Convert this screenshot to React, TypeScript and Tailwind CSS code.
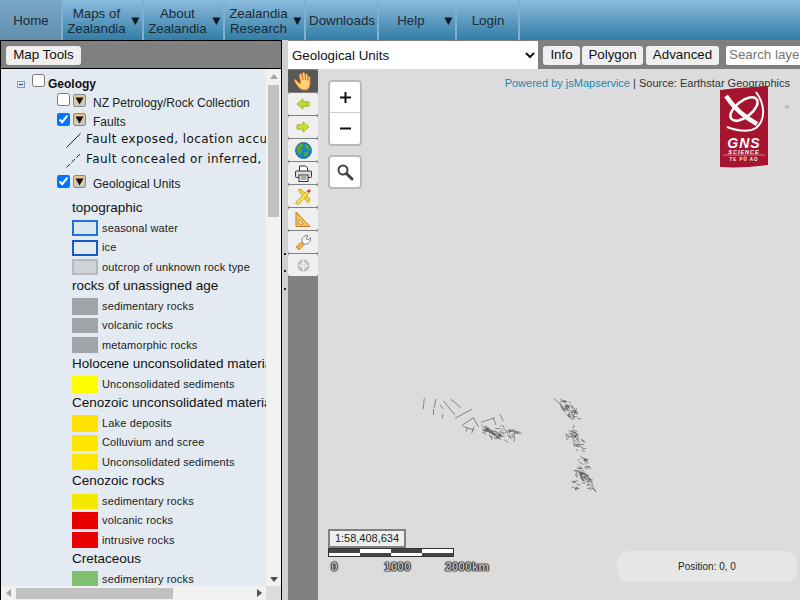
import React from "react";

const sans = "font-['Liberation_Sans',Arial,sans-serif]";

const nav = [
  { w: "w-[63px]", lines: ["Home"], active: true },
  { w: "w-[81px]", lines: ["Maps of", "Zealandia"], arrow: true },
  { w: "w-[81px]", lines: ["About", "Zealandia"], arrow: true },
  { w: "w-[81px]", lines: ["Zealandia", "Research"], arrow: true },
  { w: "w-[73px]", lines: ["Downloads"] },
  { w: "w-[78px]", lines: ["Help"], arrow: true, help: true },
  { w: "w-[63px]", lines: ["Login"] },
];

function Nav() {
  return (
    <div className="flex h-[40px] shrink-0 bg-gradient-to-b from-[#8bbcdd] to-[#2f7da6] text-[13.33px] leading-[15px] text-[#1c2a33]">
      {nav.map((n, i) => (
        <div
          key={i}
          className={
            n.w +
            " flex items-center border-r-2 border-[#7fb0cf] pl-[1px] " +
            (n.active ? "bg-gradient-to-b from-[#7aa6c4] to-[#5f8fae]" : "")
          }
        >
          {n.arrow ? (
            <>
              <div className={(n.help ? "w-[62px]" : "w-[66px]") + " pt-[1px] text-center"}>
                {n.lines.map((l) => (
                  <div key={l}>{l}</div>
                ))}
              </div>
              <span className="text-[13.33px] text-[#10181d]">▼</span>
            </>
          ) : (
            <div className="flex-1 text-center">{n.lines[0]}</div>
          )}
        </div>
      ))}
      <div className="flex-1" />
    </div>
  );
}

function Btn({ children, w }: { children: React.ReactNode; w: string }) {
  return (
    <div className={w + " flex h-[19px] items-center justify-center rounded-[3px] bg-[#efefef] text-[13.33px] text-[#111]"}>
      {children}
    </div>
  );
}

function LayerBtn() {
  return (
    <div className="flex h-[13px] w-[13px] items-center justify-center rounded-[2px] border border-[#8a8a8a] bg-gradient-to-b from-[#e8c48a] to-[#c9c9c9]">
      <svg width="9" height="8" viewBox="0 0 9 8">
        <path d="M0.5 0.5H8.5L4.5 7.5Z" fill="#111" />
      </svg>
    </div>
  );
}

function Check({ checked }: { checked?: boolean }) {
  return <input type="checkbox" checked={!!checked} readOnly className="m-0 h-[13px] w-[13px] shrink-0" />;
}

type Row =
  | { h: string }
  | { t: string; sw: string };

const rows: Row[] = [
  { h: "topographic" },
  { t: "seasonal water", sw: "h-[16px] border-2 border-[#1f72dc] bg-[#d8e6f2]" },
  { t: "ice", sw: "h-[16px] border-2 border-[#1559c4] bg-[#e3eaf1]" },
  { t: "outcrop of unknown rock type", sw: "h-[16px] border-2 border-[#b5b9bc] bg-[#cfd3d6]" },
  { h: "rocks of unassigned age" },
  { t: "sedimentary rocks", sw: "h-[17px] bg-[#a0a4a8]" },
  { t: "volcanic rocks", sw: "h-[15px] bg-[#a0a4a8]" },
  { t: "metamorphic rocks", sw: "h-[16px] bg-[#a0a4a8]" },
  { h: "Holocene unconsolidated materials" },
  { t: "Unconsolidated sediments", sw: "h-[17px] bg-[#ffff00]" },
  { h: "Cenozoic unconsolidated materials" },
  { t: "Lake deposits", sw: "h-[17px] bg-[#ffe100]" },
  { t: "Colluvium and scree", sw: "h-[16px] bg-[#ffe600]" },
  { t: "Unconsolidated sediments", sw: "h-[16px] bg-[#ffe600]" },
  { h: "Cenozoic rocks" },
  { t: "sedimentary rocks", sw: "h-[15px] bg-[#f2e800]" },
  { t: "volcanic rocks", sw: "h-[17px] bg-[#e80000]" },
  { t: "intrusive rocks", sw: "h-[16px] bg-[#e80000]" },
  { h: "Cretaceous" },
  { t: "sedimentary rocks", sw: "h-[16px] bg-[#80c070]" },
];

function Tree() {
  return (
    <div className="h-[517px] w-[265px] overflow-hidden whitespace-nowrap bg-[#e3eaf1] pt-[6px] text-[#111]">
      <div className="flex h-[18px] items-center">
        <div className="ml-[16px] flex h-[7px] w-[8px] items-center justify-center border border-[#7f9db9] bg-[#dbe6f3]">
          <div className="h-[1px] w-[4px] bg-[#1d3f73]" />
        </div>
        <div className="ml-[7px] -translate-y-[2px]"><Check /></div>
        <span className="ml-[3px] text-[12px] font-bold">Geology</span>
      </div>
      <div className="flex h-[19px] items-center pl-[56px]">
        <div className="-translate-y-[2px]"><Check /></div>
        <div className="ml-[3px] -translate-y-[2px]"><LayerBtn /></div>
        <span className="ml-[7px] text-[12px] text-[#222]">NZ Petrology/Rock Collection</span>
      </div>
      <div className="flex h-[19px] items-center pl-[56px]">
        <div className="-translate-y-[1px]"><Check checked /></div>
        <div className="ml-[3px] -translate-y-[2px]"><LayerBtn /></div>
        <span className="ml-[7px] text-[12px] text-[#222]">Faults</span>
      </div>
      <div className="-mt-[2px] flex h-[20px] items-center pl-[65px]">
        <svg width="15" height="15" viewBox="0 0 15 15" className="mt-[2px] shrink-0">
          <path d="M0.5 14.5L14.5 0.5" stroke="#222" strokeWidth="1" />
        </svg>
        <span className="ml-[5px] font-['DejaVu_Sans',sans-serif] text-[12px] tracking-[0.4px]">Fault exposed, location accurate</span>
      </div>
      <div className="flex h-[20px] items-center pl-[65px]">
        <svg width="15" height="15" viewBox="0 0 15 15" className="mt-[2px] shrink-0">
          <path d="M0.5 14.5L14.5 0.5" stroke="#222" strokeWidth="1" strokeDasharray="5 2" />
        </svg>
        <span className="ml-[5px] font-['DejaVu_Sans',sans-serif] text-[12px] tracking-[0.4px]">Fault concealed or inferred, location</span>
      </div>
      <div className="mt-[5px] flex h-[19px] items-center pl-[56px]">
        <div className="-translate-y-[1px]"><Check checked /></div>
        <div className="ml-[3px] -translate-y-[2px]"><LayerBtn /></div>
        <span className="ml-[7px] text-[12px] text-[#222]">Geological Units</span>
      </div>
      <div className="mt-[5.75px] pl-[71px]">
        {rows.map((r, i) =>
          "h" in r ? (
            <div key={i} className="flex h-[19.5px] items-center text-[13.5px] text-[#111]">
              {r.h}
            </div>
          ) : (
            <div key={i} className="flex h-[19.5px] items-center">
              <div className={"w-[26px] shrink-0 " + r.sw} />
              <span className="ml-[4px] text-[11px] tracking-[0.15px] text-[#222]">{r.t}</span>
            </div>
          )
        )}
      </div>
    </div>
  );
}

function LeftPanel() {
  return (
    <div className="flex w-[282px] shrink-0 flex-col border-x border-black bg-[#808080]">
      <div className="flex h-[29px] shrink-0 items-center border-y border-black bg-[#808080] pl-[5px] pt-[1px]">
        <Btn w="w-[75px]">Map Tools</Btn>
      </div>
      <div className="flex">
        <Tree />
        <div className="flex h-[517px] w-[15px] flex-col items-center bg-[#f1f1f1] pt-[5px]">
          <svg width="8" height="5" viewBox="0 0 8 5"><path d="M0 5L4 0L8 5Z" fill="#a3a3a3" /></svg>
          <div className="mt-[6px] h-[132px] w-[11px] bg-[#c1c1c1]" />
          <div className="flex-1" />
          <svg width="8" height="5" viewBox="0 0 8 5" className="mb-[4px]"><path d="M0 0L8 0L4 5Z" fill="#505050" /></svg>
        </div>
      </div>
      <div className="flex h-[14px] bg-[#f1f1f1]">
        <div className="flex w-[265px] items-center pl-[5px]">
          <svg width="5" height="8" viewBox="0 0 5 8"><path d="M5 0V8L0 4Z" fill="#a3a3a3" /></svg>
          <div className="ml-[5px] h-[11px] w-[157px] bg-[#c1c1c1]" />
          <div className="flex-1" />
          <svg width="5" height="8" viewBox="0 0 5 8" className="mr-[4px]"><path d="M0 0V8L5 4Z" fill="#505050" /></svg>
        </div>
        <div className="flex-1 bg-[#dcdcdc]" />
      </div>
    </div>
  );
}

function Splitter() {
  return (
    <div className="flex w-[6px] shrink-0 flex-col items-center bg-[#d0d0d0] pt-[213px]">
      <div className="h-[2px] w-[2px] bg-[#222]" />
      <div className="mt-[15px] h-[2px] w-[2px] bg-[#222]" />
      <div className="mt-[16px] h-[2px] w-[2px] bg-[#222]" />
    </div>
  );
}

const tools = [
  <svg key="h" width="20" height="20" viewBox="0 0 20 20">
    <path d="M4 10C3 8.5 2 8 1.5 9C1.5 10.5 4 14 5.500 16C7 18 9 19 12 19C15.500 19 17 16 17 12V6.500C17 5 15 5 15 6.500V9.500L14.500 4C14.500 2.500 12.500 2.500 12.500 4L12.500 9L11.800 2.500C11.500 1 9.500 1 9.500 2.500L10 9L8.500 3.500C8 2.300 6 2.500 6.300 4L7.500 11L7 13Z" fill="#ffd27a" stroke="#d9822b" strokeWidth="1" />
  </svg>,
  <svg key="l" width="14" height="12" viewBox="0 0 16 14">
    <path d="M1 7L8 1V4.500H15V9.500H8V13Z" fill="#b4e036" stroke="#8fae28" strokeWidth="1" />
  </svg>,
  <svg key="r" width="14" height="12" viewBox="0 0 16 14">
    <path d="M15 7L8 1V4.500H1V9.500H8V13Z" fill="#d2e030" stroke="#9aab24" strokeWidth="1" />
  </svg>,
  <svg key="g" width="17" height="17" viewBox="0 0 17 17">
    <circle cx="8.500" cy="8.500" r="8" fill="#1584c4" stroke="#1f5f87" strokeWidth="0.800" />
    <path d="M2 5C4 2 7 1.500 8 2C9 4 7 5 6 6C7 8 7 11 5 13C3 11 1 8 2 5ZM10 2C13 3 15 5 15.500 8C14 9 13 8 12 7C10 6 10 4 10 2ZM10 10C12 9 14 10 13 12C12 14 10 15 9 14C9 12 9 11 10 10Z" fill="#5aa82c" />
  </svg>,
  <svg key="p" width="17" height="17" viewBox="0 0 17 17">
    <path d="M4.500 6V1H10.500L12.500 3V6" fill="#fff" stroke="#333" />
    <rect x="0.500" y="6" width="16" height="6.500" rx="1" fill="#ddd" stroke="#333" />
    <rect x="4" y="10" width="9" height="6.500" fill="#fff" stroke="#333" />
    <path d="M5.500 12H11.500M5.500 14H11.500" stroke="#555" />
  </svg>,
  <svg key="e" width="17" height="17" viewBox="0 0 17 17">
    <path d="M3 2L6 1L15 11L13 15Z" fill="#f2d43c" stroke="#c59a20" strokeWidth="0.800" />
    <path d="M1 14L12 3L14 5L4 16L1 16Z" fill="#f6e05a" stroke="#c59a20" strokeWidth="0.800" />
    <path d="M12 3L14 1L16 3L14 5Z" fill="#d8343a" />
  </svg>,
  <svg key="t" width="16" height="17" viewBox="0 0 16 17">
    <path d="M1 1L15 15.500H1Z" fill="#f0c36a" stroke="#b97f20" />
    <path d="M4 8.500L8.500 13H4Z" fill="#fff" stroke="#b97f20" strokeWidth="0.800" />
  </svg>,
  <svg key="w" width="17" height="17" viewBox="0 0 17 17">
    <path d="M1 13L4 16L9 10.500L6.500 8Z" fill="#f0b84a" stroke="#b97f20" strokeWidth="0.800" />
    <path d="M7.500 8.500C6 5 8.500 1 13 1.500L11 4.500L13 6L15.500 3.500C16.500 7 13 11 9.500 10Z" fill="#fff" stroke="#777" strokeWidth="0.900" />
  </svg>,
  <svg key="c" width="13" height="13" viewBox="0 0 13 13">
    <circle cx="6.500" cy="6.500" r="5.500" fill="#c8c8c8" stroke="#a8a8a8" />
    <path d="M6.500 0.500V12.500M0.500 6.500H12.500" stroke="#f0f0f0" strokeWidth="1.200" />
    <circle cx="6.500" cy="6.500" r="2.500" fill="none" stroke="#f0f0f0" />
  </svg>,
];

function Toolbar() {
  return (
    <div className="flex w-[30px] shrink-0 flex-col gap-[1px] bg-[#808080] pt-[1px]">
      {tools.map((t, i) => (
        <div
          key={i}
          className={
            "flex h-[22px] items-center justify-center rounded-[2px] " +
            (i === 0 ? "bg-[#585858]" : "bg-[#efefef]")
          }
        >
          {t}
        </div>
      ))}
    </div>
  );
}

// deterministic scatter for the fault traces
function cluster(seed: number, x0: number, y0: number, x1: number, y1: number, n: number) {
  let s = seed;
  const r = () => {
    s = (s * 16807) % 2147483647;
    return (s % 1000) / 1000;
  };
  const out: string[] = [];
  for (let i = 0; i < n; i++) {
    const t = r();
    const x = x0 + (x1 - x0) * t + (r() - 0.5) * 26;
    const y = y0 + (y1 - y0) * t + (r() - 0.5) * 26;
    const a = r() * 1.5 - 0.2;
    const l = 5 + r() * 11;
    out.push(`M${x.toFixed(1)} ${y.toFixed(1)}l${(Math.cos(a) * l).toFixed(1)} ${(Math.sin(a) * l).toFixed(1)}`);
  }
  return out.join("");
}

const faultPaths =
  "M43 40L41 55M41 58L40 72M78 42L72 68M71 72L70 90M98 88L97 100M90 60L100 72M100 47L135 90M122 42L152 68M135 100L185 73" +
  "M155 122L190 98M190 98L205 125M160 125L192 135M185 145L192 125M168 140L172 128M213 112L255 98M270 88L280 108M250 100L258 120" +
  cluster(11, 220, 130, 275, 155, 56) +
  cluster(29, 280, 130, 315, 150, 22) +
  "M312 135L313 170M432 40L470 78" +
  cluster(37, 450, 45, 490, 90, 44) +
  "M500 70L485 105" +
  cluster(53, 480, 140, 505, 175, 38) +
  cluster(71, 510, 195, 520, 250, 18) +
  cluster(83, 500, 255, 540, 300, 52) +
  cluster(97, 485, 295, 495, 300, 10) +
  "M492 120L490 130M468 145L472 165M515 195L525 200";

function Logo() {
  return (
    <svg width="48" height="82" viewBox="0 0 48 82" className="absolute left-[402px] top-[17px]">
      <path d="M0 4C16 2 32 1 48 0V79C32 81 16 82 0 81Z" fill="#a5152f" />
      <g fill="none" stroke="#fff">
        <path d="M6 10C14 22 26 32 37 38" strokeWidth="4.500" />
        <ellipse cx="24" cy="23" rx="16" ry="8" transform="rotate(-38 24 23)" strokeWidth="2.500" />
        <path d="M36 6C45 18 46 34 36 42C28 47 18 45 7 41" strokeWidth="2" />
      </g>
      <circle cx="24" cy="23" r="2.500" fill="#a5152f" />
      <text x="24" y="61.500" textAnchor="middle" fill="#fff" fontSize="14" fontWeight="700" fontStyle="italic" letterSpacing="1" fontFamily="Liberation Sans, sans-serif">GNS</text>
      <text x="24" y="67.500" textAnchor="middle" fill="#fff" fontSize="5.500" fontWeight="700" fontStyle="italic" fontFamily="Liberation Sans, sans-serif" letterSpacing="1">SCIENCE</text>
      <path d="M3 69H45" stroke="#e8c4ca" strokeWidth="0.600" />
      <text x="24" y="75" textAnchor="middle" fill="#fff" fontSize="4.500" fontWeight="700" fontFamily="Liberation Sans, sans-serif" letterSpacing="1">TE PŪ AO</text>
    </svg>
  );
}

function MapArea() {
  return (
    <div className="relative flex-1 overflow-hidden bg-[#dcdcdc]">
      <div className="absolute right-[10px] top-[6px] whitespace-nowrap text-[11px] text-[#333]">
        <span className="text-[#1f86b0]">Powered by jsMapservice</span> | Source: Earthstar Geographics
      </div>
      <Logo />
      <div className="absolute left-[467px] top-[36px] h-[4px] w-[4px] rounded-full bg-[#bdbdbd]" />
      <div className="absolute left-[10px] top-[11px] w-[34px] overflow-hidden rounded-[4px] border-2 border-[#bbbbbb] bg-white text-black">
        <div className="flex h-[31px] items-center justify-center border-b border-[#cccccc]">
          <svg width="13" height="13" viewBox="0 0 13 13"><path d="M6.500 1V12M1 6.500H12" stroke="#111" strokeWidth="2" /></svg>
        </div>
        <div className="flex h-[31px] items-center justify-center">
          <svg width="13" height="3" viewBox="0 0 13 3"><path d="M1 1.500H12" stroke="#111" strokeWidth="2" /></svg>
        </div>
      </div>
      <div className="absolute left-[10px] top-[86px] flex h-[34px] w-[34px] items-center justify-center rounded-[4px] border-2 border-[#bbbbbb] bg-white">
        <svg width="18" height="18" viewBox="0 0 18 18">
          <circle cx="7" cy="7" r="4.500" fill="none" stroke="#444" strokeWidth="2" />
          <path d="M10.500 10.500L16 16" stroke="#444" strokeWidth="3" strokeLinecap="round" />
        </svg>
      </div>
      <svg width="200" height="110" viewBox="0 0 600 330" className="absolute left-[92px] top-[316px]">
        <path d={faultPaths} fill="none" stroke="#555" strokeWidth="2" />
      </svg>
      <div className="absolute left-[10px] top-[460px] w-[126px]">
        <div className="flex h-[19px] w-[78px] items-center justify-center border-2 border-[#808080] bg-[#eeeeee] text-[11px] text-[#222]">
          1:58,408,634
        </div>
        <div className="flex h-[9px] border border-[#333]">
          {[0, 1, 2, 3].map((i) => (
            <div key={i} className="flex flex-1 flex-col">
              <div className={"flex-1 " + (i % 2 === 0 ? "bg-[#444]" : "bg-white")} />
              <div className={"flex-1 " + (i % 2 === 0 ? "bg-white" : "bg-[#444]")} />
            </div>
          ))}
        </div>
        <div className="relative h-[14px] whitespace-nowrap text-[12px] font-bold text-[#bbbbbb] [text-shadow:0_0_1px_#000,0_0_1px_#000,0_0_1px_#000,0_0_2px_#222]">
          <span className="absolute left-[3px] top-[1px]">0</span>
          <span className="absolute left-[56px] top-[1px]">1000</span>
          <span className="absolute left-[117px] top-[1px]">2000km</span>
        </div>
      </div>
      <div className="absolute left-[299px] top-[482px] flex h-[31px] w-[180px] items-center justify-center rounded-[12px] bg-[#e6e6e6] text-[10px] text-[#222]">
        Position: 0, 0
      </div>
    </div>
  );
}

export default function App() {
  return (
    <div className={"flex h-[600px] w-[800px] flex-col overflow-hidden " + sans}>
      <Nav />
      <div className="flex min-h-0 flex-1">
        <LeftPanel />
        <Splitter />
        <div className="flex min-w-0 flex-1 flex-col">
          <div className="flex h-[29px] shrink-0 items-center bg-[#808080] pt-[1px]">
            <select className="h-[28px] w-[250px] bg-white text-[13.33px] text-[#111]" defaultValue="g">
              <option value="g">Geological Units</option>
            </select>
            <div className="ml-[5px]"><Btn w="w-[37px]">Info</Btn></div>
            <div className="ml-[2px]"><Btn w="w-[61px]">Polygon</Btn></div>
            <div className="ml-[3px]"><Btn w="w-[73px]">Advanced</Btn></div>
            <div className="ml-[7px] flex h-[19px] flex-1 items-center overflow-hidden whitespace-nowrap rounded-l-[2px] bg-white pl-[3px] text-[13.33px] text-[#757575]">
              Search layers
            </div>
          </div>
          <div className="flex min-h-0 flex-1">
            <Toolbar />
            <MapArea />
          </div>
        </div>
      </div>
    </div>
  );
}
